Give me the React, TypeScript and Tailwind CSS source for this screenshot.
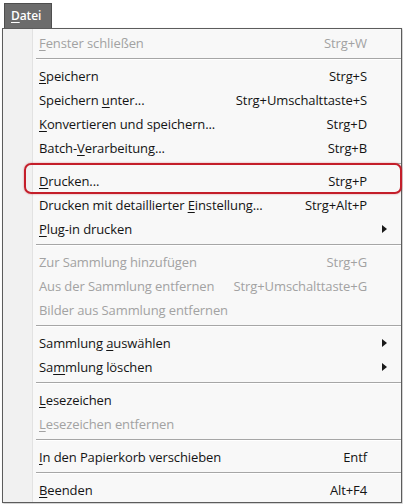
import React from "react";

type Item =
  | { kind: "sep" }
  | {
      kind: "item";
      label: React.ReactNode;
      shortcut?: string;
      submenu?: boolean;
      disabled?: boolean;
      marked?: boolean;
    };

const u = (s: string) => <span className="underline underline-offset-2">{s}</span>;

const items: Item[] = [
  { kind: "item", label: <>{u("F")}enster schließen</>, shortcut: "Strg+W", disabled: true },
  { kind: "sep" },
  { kind: "item", label: <>{u("S")}peichern</>, shortcut: "Strg+S" },
  { kind: "item", label: <>Speichern {u("u")}nter...</>, shortcut: "Strg+Umschalttaste+S" },
  { kind: "item", label: <>{u("K")}onvertieren und speichern...</>, shortcut: "Strg+D" },
  { kind: "item", label: <>Batch-{u("V")}erarbeitung...</>, shortcut: "Strg+B" },
  { kind: "sep" },
  { kind: "item", label: <>{u("D")}rucken...</>, shortcut: "Strg+P", marked: true },
  { kind: "item", label: <>Drucken mit detaillierter {u("E")}instellung...</>, shortcut: "Strg+Alt+P" },
  { kind: "item", label: <>{u("P")}lug-in drucken</>, submenu: true },
  { kind: "sep" },
  { kind: "item", label: "Zur Sammlung hinzufügen", shortcut: "Strg+G", disabled: true },
  { kind: "item", label: "Aus der Sammlung entfernen", shortcut: "Strg+Umschalttaste+G", disabled: true },
  { kind: "item", label: "Bilder aus Sammlung entfernen", disabled: true },
  { kind: "sep" },
  { kind: "item", label: <>Sammlung {u("a")}uswählen</>, submenu: true },
  { kind: "item", label: <>Sa{u("m")}mlung löschen</>, submenu: true },
  { kind: "sep" },
  { kind: "item", label: <>{u("L")}esezeichen</> },
  { kind: "item", label: <>{u("L")}esezeichen entfernen</>, disabled: true },
  { kind: "sep" },
  { kind: "item", label: <>{u("I")}n den Papierkorb verschieben</>, shortcut: "Entf" },
  { kind: "sep" },
  { kind: "item", label: <>{u("B")}eenden</>, shortcut: "Alt+F4" },
];

function Arrow() {
  return (
    <svg width="5" height="8" viewBox="0 0 5 8" className="ml-[15px]">
      <path d="M0 0 L5 4 L0 8 Z" fill="#1a1a1a" />
    </svg>
  );
}

export default function App() {
  return (
    <div
      className="w-[403px] h-[504px] bg-white text-[13px] leading-none tracking-[-0.1px]"
      style={{ fontFamily: '"Open Sans", "Noto Sans", sans-serif' }}
    >
      <div className="pt-[3px] pl-[4px] flex">
        <div className="h-[25px] w-[48px] bg-[#6c6c6c] border border-[#4e4e4e] border-b-0 text-white text-[12px] flex items-center pl-[6px] font-semibold">
          {u("D")}atei
        </div>
      </div>
      <div className="ml-[2px] w-[400px] border border-[#5c5c5c] bg-[#f8f8f8] flex shadow-[1px_1px_2px_rgba(0,0,0,0.25)]">
        <div className="w-[30px] bg-[#f1f1f1] border-r border-[#e2e2e2]" />
        <div className="flex-1 flex flex-col pt-[1px] pb-[1px]">
          {items.map((it, i) =>
            it.kind === "sep" ? (
              <div key={i} className="h-[9px] flex flex-col justify-center pl-[3px]">
                <div className="h-[1px] bg-[#a6a6a6]" />
                <div className="h-[1px] bg-white" />
              </div>
            ) : (
              <div
                key={i}
                className={`relative h-[24px] grid grid-cols-[1fr_auto_34px] items-center pl-[6px] pt-[2px] ${
                  it.disabled ? "text-[#a2a2a2]" : "text-[#141414]"
                }`}
              >
                {it.marked && (
                  <span className="absolute left-[-9px] right-[-1px] top-[-5px] bottom-[-2px] rounded-[7px] border-2 border-[#c41e2a] shadow-[0_0_2px_rgba(196,30,42,0.5)]" />
                )}
                <span className="whitespace-nowrap">{it.label}</span>
                <span className="whitespace-nowrap text-right">{it.shortcut ?? ""}</span>
                <span className="flex items-center">{it.submenu ? <Arrow /> : null}</span>
              </div>
            )
          )}
        </div>
      </div>
    </div>
  );
}
